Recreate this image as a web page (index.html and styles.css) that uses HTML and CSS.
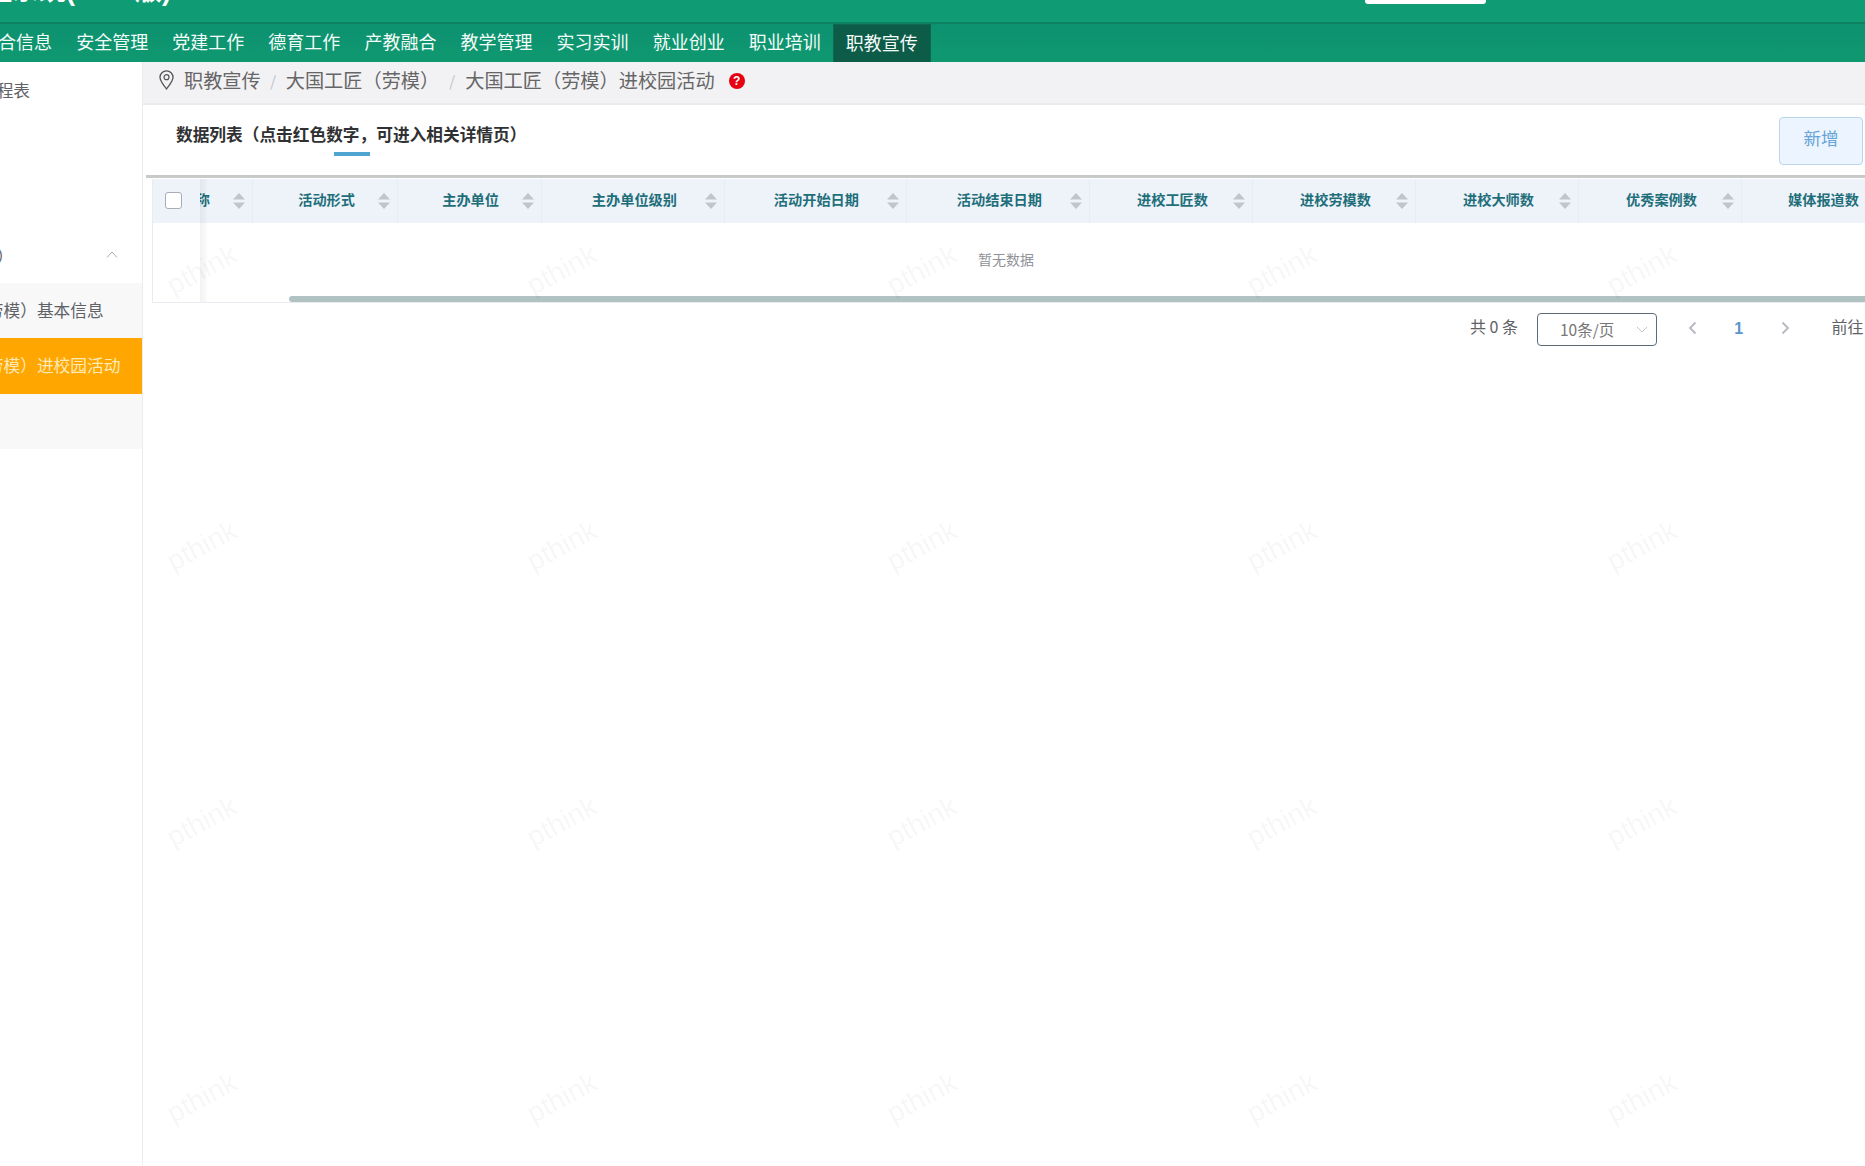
FILE: index.html
```html
<!DOCTYPE html>
<html lang="zh-CN">
<head>
<meta charset="utf-8">
<title>职教宣传</title>
<link rel="stylesheet" href="styles.css">
</head>
<body>
<div class="page">
  <header class="topbar">
    <div class="brand">管理系统(2.0.0版)</div>
    <div class="user-box"></div>
  </header>
  <nav class="nav">
    <a class="nav-item">综合信息</a>
    <a class="nav-item">安全管理</a>
    <a class="nav-item">党建工作</a>
    <a class="nav-item">德育工作</a>
    <a class="nav-item">产教融合</a>
    <a class="nav-item">教学管理</a>
    <a class="nav-item">实习实训</a>
    <a class="nav-item">就业创业</a>
    <a class="nav-item">职业培训</a>
    <a class="nav-item nav-active">职教宣传</a>
  </nav>
  <div class="main">
    <aside class="sidebar">
      <div class="side-row"><span class="clip-short">课程表</span></div>
      <div class="side-gap"></div>
      <div class="side-row side-parent">
        <span class="clip-parent">大国工匠（劳模）</span>
        <svg class="side-chevron" width="12" height="7" viewBox="0 0 12 7"><path d="M1 6.5 6 1l5 5.5" fill="none" stroke="#a9adb3" stroke-width="1"/></svg>
      </div>
      <div class="submenu">
        <div class="sub-item"><span class="clip-sub">大国工匠（劳模）基本信息</span></div>
        <div class="sub-item sub-active"><span class="clip-sub">大国工匠（劳模）进校园活动</span></div>
        <div class="sub-item sub-last"></div>
      </div>
    </aside>
    <main class="content">
      <div class="crumbs">
        <svg class="pin" width="15" height="20" viewBox="0 0 15 20"><path d="M7.5 19C4.5 14.6 1 11.4 1 7.3a6.5 6.5 0 0 1 13 0c0 4.1-3.500 7.300-6.500 11.700Z" fill="none" stroke="#555" stroke-width="1.300"/><circle cx="7.500" cy="7.200" r="2.500" fill="none" stroke="#555" stroke-width="1.200"/></svg>
        <span class="crumb">职教宣传</span>
        <span class="crumb-sep crumb-sep-a">/</span>
        <span class="crumb">大国工匠（劳模）</span>
        <span class="crumb-sep crumb-sep-b">/</span>
        <span class="crumb">大国工匠（劳模）进校园活动</span>
        <span class="help">?</span>
      </div>
      <div class="title-row">
        <div class="list-title">数据列表（点击红色数字，可进入相关详情页）</div>
        <button class="btn-add">新增</button>
      </div>
      <div class="rule"></div>
      <div class="table">
        <div class="thead">
          <div class="th th-check"><span class="checkbox"></span></div>
          <div class="th"><span class="th-text">活动名称</span><svg class="sort" width="12" height="16" viewBox="0 0 12 16"><path d="M6 0l6 6.500H0zM0 9.500h12L6 16z"/></svg></div>
          <div class="th"><span class="th-text">活动形式</span><svg class="sort" width="12" height="16" viewBox="0 0 12 16"><path d="M6 0l6 6.500H0zM0 9.500h12L6 16z"/></svg></div>
          <div class="th"><span class="th-text">主办单位</span><svg class="sort" width="12" height="16" viewBox="0 0 12 16"><path d="M6 0l6 6.500H0zM0 9.500h12L6 16z"/></svg></div>
          <div class="th"><span class="th-text gap6">主办单位级别</span><svg class="sort" width="12" height="16" viewBox="0 0 12 16"><path d="M6 0l6 6.500H0zM0 9.500h12L6 16z"/></svg></div>
          <div class="th"><span class="th-text gap6">活动开始日期</span><svg class="sort" width="12" height="16" viewBox="0 0 12 16"><path d="M6 0l6 6.500H0zM0 9.500h12L6 16z"/></svg></div>
          <div class="th"><span class="th-text gap6">活动结束日期</span><svg class="sort" width="12" height="16" viewBox="0 0 12 16"><path d="M6 0l6 6.500H0zM0 9.500h12L6 16z"/></svg></div>
          <div class="th"><span class="th-text gap5">进校工匠数</span><svg class="sort" width="12" height="16" viewBox="0 0 12 16"><path d="M6 0l6 6.500H0zM0 9.500h12L6 16z"/></svg></div>
          <div class="th"><span class="th-text gap5">进校劳模数</span><svg class="sort" width="12" height="16" viewBox="0 0 12 16"><path d="M6 0l6 6.500H0zM0 9.500h12L6 16z"/></svg></div>
          <div class="th"><span class="th-text gap5">进校大师数</span><svg class="sort" width="12" height="16" viewBox="0 0 12 16"><path d="M6 0l6 6.500H0zM0 9.500h12L6 16z"/></svg></div>
          <div class="th"><span class="th-text gap5">优秀案例数</span><svg class="sort" width="12" height="16" viewBox="0 0 12 16"><path d="M6 0l6 6.500H0zM0 9.500h12L6 16z"/></svg></div>
          <div class="th"><span class="th-text gap5">媒体报道数</span><svg class="sort" width="12" height="16" viewBox="0 0 12 16"><path d="M6 0l6 6.500H0zM0 9.500h12L6 16z"/></svg></div>
        </div>
        <div class="tbody"><div class="empty">暂无数据</div></div>
        <div class="scroll-track"><div class="scroll-thumb"></div></div>
        <div class="fixed-shadow"></div>
      </div>
      <div class="pager">
        <span class="total">共 0 条</span>
        <div class="size-select">
          <span>10条/页</span>
          <svg width="12" height="7" viewBox="0 0 12 7"><path d="M1 1l5 5 5-5" fill="none" stroke="#c0c4cc" stroke-width="1"/></svg>
        </div>
        <span class="page-btn"><svg width="9" height="14" viewBox="0 0 9 14"><path d="M7.500 1.500 2 7l5.500 5.500" fill="none" stroke="#b4b8bf" stroke-width="1.800"/></svg></span>
        <span class="page-btn page-current">1</span>
        <span class="page-btn"><svg width="9" height="14" viewBox="0 0 9 14"><path d="M1.500 1.500 7 7l-5.500 5.500" fill="none" stroke="#b4b8bf" stroke-width="1.800"/></svg></span>
        <span class="jump">前往</span>
      </div>
    </main>
  </div>
  <div class="watermarks">
    <span>pthink</span><span>pthink</span><span>pthink</span><span>pthink</span><span>pthink</span>
    <span>pthink</span><span>pthink</span><span>pthink</span><span>pthink</span><span>pthink</span>
    <span>pthink</span><span>pthink</span><span>pthink</span><span>pthink</span><span>pthink</span>
    <span>pthink</span><span>pthink</span><span>pthink</span><span>pthink</span><span>pthink</span>
  </div>
</div>
</body>
</html>
```
FILE: styles.css
```css
* { box-sizing: border-box; }
html, body { margin: 0; padding: 0; }
body {
  font-family: "Noto Sans CJK SC", "Liberation Sans", sans-serif;
  background: #fff;
  color: #606266;
}
.page {
  position: relative;
  width: 1865px;
  height: 1166px;
  overflow: hidden;
  display: flex;
  flex-direction: column;
}

/* top bar */
.topbar {
  height: 24px;
  flex: none;
  display: flex;
  background: #0f9b74;
  border-bottom: 2px solid #0c8261;
  overflow: hidden;
}
.brand {
  flex: none;
  width: 1315px;
  margin-top: -30px;
  margin-left: -42px;
  height: 42px;
  line-height: 42px;
  font-size: 27px;
  font-weight: 700;
  color: #fff;
  font-family: "Liberation Sans", "Noto Sans CJK SC", sans-serif;
  white-space: nowrap;
}
.user-box {
  flex: none;
  width: 121px;
  height: 4px;
  margin-left: 92px;
  background: #fff;
  border-radius: 0 0 3px 3px;
}

/* nav */
.nav {
  height: 38px;
  flex: none;
  display: flex;
  background: linear-gradient(#0d9170, #0f9970);
  overflow: hidden;
}
.nav-item {
  flex: none;
  width: 96.100px;
  line-height: 35px;
  text-align: center;
  font-size: 18px;
  color: #f4fbf8;
  white-space: nowrap;
}
.nav-item:first-child { margin-left: -32px; }
.nav-active {
  width: 98px;
  background: #0c5c48;
  border: 1px solid #0c6a52;
  border-bottom: 0;
  line-height: 34px;
}

/* layout */
.main {
  flex: 1;
  display: flex;
  min-height: 0;
}
.sidebar {
  flex: none;
  width: 143px;
  border-right: 1px solid #ececec;
  background: #fff;
  overflow: hidden;
  font-size: 16.700px;
  color: #5f6266;
}
.side-row {
  height: 56px;
  line-height: 56px;
  white-space: nowrap;
  position: relative;
}
.side-gap { height: 110px; }
.side-parent { display: flex; align-items: center; justify-content: space-between; padding-right: 24px; }
.clip-short { display: block; margin-left: -20px; }
.clip-parent { display: block; margin-left: -120px; }
.side-chevron { flex: none; margin-top: -4px; }
.submenu { margin-top: -1px; background: #f8f8f9; }
.sub-item {
  height: 55px;
  line-height: 55px;
  white-space: nowrap;
  overflow: hidden;
}
.clip-sub { display: block; margin-left: -96.600px; }
.sub-active {
  height: 56px;
  line-height: 54px;
  background: #ffa600;
  color: #ffeab8;
}
.sub-last { height: 55px; }

/* content */
.content {
  flex: 1;
  min-width: 0;
  overflow: hidden;
  background: #fff;
}
.crumbs {
  height: 43px;
  display: flex;
  align-items: center;
  padding: 0 0 2px 16px;
  background: #f2f1f4;
  border-bottom: 2px solid #ebebee;
  font-size: 19.200px;
  color: #666;
  white-space: nowrap;
}
.crumb { margin-top: -3px; }
.pin { flex: none; margin-right: 10px; margin-top: -3px; }
.crumb-sep { color: #c0c4cc; font-size: 15px; text-align: center; margin-top: -2px; }
.crumb-sep-a { width: 25px; }
.crumb-sep-b { width: 26px; }
.help {
  flex: none;
  width: 16px;
  height: 16px;
  margin-left: 14px;
  margin-top: -1px;
  border-radius: 50%;
  background: #e60012;
  color: #fff;
  font: 700 12px/16px "Liberation Sans", sans-serif;
  text-align: center;
}
.title-row {
  height: 70px;
  display: flex;
  align-items: center;
  justify-content: space-between;
  padding: 0 2px 0 33px;
}
.list-title {
  position: relative;
  margin-top: -13px;
  font-size: 16.700px;
  font-weight: 700;
  color: #303133;
  white-space: nowrap;
}
.list-title::after {
  content: "";
  position: absolute;
  left: 158px;
  bottom: -10px;
  width: 36px;
  height: 4px;
  background: #4ea5d0;
}
.btn-add {
  width: 84px;
  height: 48px;
  margin-top: 2px;
  background: #ecf5ff;
  border: 1px solid #b9d6ec;
  border-radius: 4px;
  color: #66a3d6;
  font: inherit;
  font-size: 17.500px;
  padding: 0 0 8px;
}
.rule {
  height: 3px;
  margin-left: 3px;
  background: #c8c9c9;
}

/* table */
.table {
  position: relative;
  margin: 1px 0 0 9px;
  border-left: 1px solid #e8ecf0;
  border-bottom: 1px solid #e8ecf0;
  height: 124px;
}
.thead {
  display: grid;
  grid-template-columns: 47px 53px 145px 144px 183px 182px 183px 163px 163px 163px 163px 162px;
  height: 44px;
  background: #eef3fa;
}
.th {
  display: flex;
  align-items: center;
  justify-content: flex-end;
  padding-right: 7px;
  border-right: 1px solid #e7edf6;
  overflow: hidden;
  white-space: nowrap;
}
.th-check { justify-content: flex-start; padding: 0 0 2px 12px; border-right: 0; }
.th-text {
  flex: none;
  margin: -4px 23px 0 0;
  font-size: 14.200px;
  font-weight: 700;
  color: #1f6f7a;
}
.th-text.gap5 { margin-right: 25px; }
.th-text.gap6 { margin-right: 28px; }
.sort { flex: none; fill: #c0c4cc; margin-top: -1px; }
.checkbox {
  display: block;
  width: 17px;
  height: 17px;
  border: 1px solid #a6acb8;
  border-radius: 3px;
  background: #fff;
}
.tbody { height: 73px; }
.empty {
  width: 1706px;
  padding-top: 26px;
  text-align: center;
  font-size: 14px;
  line-height: 20px;
  color: #909399;
}
.scroll-track { height: 6px; padding-left: 136px; }
.scroll-thumb { height: 6px; background: #b1c2c2; border-radius: 3px 0 0 3px; }
.fixed-shadow {
  position: absolute;
  left: 47px;
  top: 0;
  bottom: 0;
  width: 7px;
  background: linear-gradient(90deg, rgba(0, 0, 0, .05), rgba(0, 0, 0, .015));
}

/* pagination */
.pager {
  display: flex;
  align-items: center;
  height: 33px;
  margin-top: 10px;
  padding-left: 1327px;
  font-size: 16px;
  color: #606266;
  white-space: nowrap;
}
.total { flex: none; width: 49px; margin-top: -7px; }
.size-select {
  flex: none;
  width: 120px;
  height: 33px;
  margin-left: 18px;
  padding: 0 8px 0 22px;
  display: flex;
  align-items: center;
  justify-content: space-between;
  border: 1px solid #5d6b78;
  border-radius: 4px;
  color: #777;
  font-size: 15.500px;
}
.size-select span { margin-top: -1px; }
.page-btn {
  flex: none;
  width: 46.500px;
  margin-top: -4px;
  display: flex;
  align-items: center;
  justify-content: center;
}
.size-select + .page-btn { margin-left: 12px; }
.page-current {
  margin-top: -2px;
  font: 700 16px "Liberation Sans", sans-serif;
  color: #5b94c9;
}
.jump { flex: none; margin-left: 23px; margin-top: -7px; }

/* watermark */
.watermarks {
  position: absolute;
  left: 22px;
  top: 132px;
  display: grid;
  grid-template-columns: repeat(5, 360px);
  grid-auto-rows: 276px;
  pointer-events: none;
}
.watermarks span {
  display: flex;
  align-items: center;
  justify-content: center;
  transform: rotate(-28deg);
  font: 28px "Liberation Sans", sans-serif;
  color: rgba(0, 0, 0, .05);
}
```
